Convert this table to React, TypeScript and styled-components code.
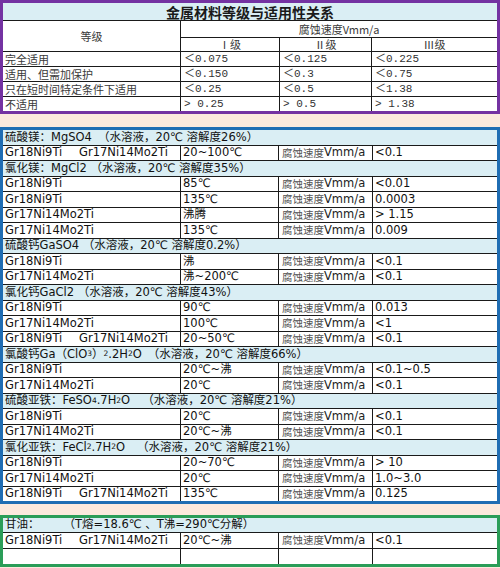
import React from 'react';
import styled, { createGlobalStyle } from 'styled-components';

const GlobalStyle = createGlobalStyle`
    html, body {
        margin: 0;
        padding: 0;
        background: #fce9dd;
    }
    body {
        font-family: "DejaVu Sans", "Noto Sans CJK SC", sans-serif;
        color: #111;
    }
`

const Page = styled.div`
    width: 500px;
    height: 568px;
    background: #fce9dd;
    display: flex;
    flex-direction: column;
    overflow: hidden;
`

const Section = styled.section<{ $color: string; $space?: number }>`
    border: 3px solid ${({ $color }) => $color};
    margin-top: ${({ $space }) => $space ?? 0}px;
    background: #1a1a1a;
`

const Grid = styled.div<{ $cols: string; $rows: string }>`
    display: grid;
    grid-template-columns: ${({ $cols }) => $cols};
    grid-template-rows: ${({ $rows }) => $rows};
    gap: 1px;
`

const Cell = styled.div<{ $tint?: boolean; $center?: boolean; $span?: string; $rowSpan?: number }>`
    background: ${({ $tint }) => ($tint ? '#daeef4' : '#fff')};
    display: flex;
    align-items: center;
    justify-content: ${({ $center }) => ($center ? 'center' : 'flex-start')};
    padding-left: ${({ $center }) => ($center ? 0 : 2)}px;
    grid-column: ${({ $span }) => $span ?? 'auto'};
    grid-row: ${({ $rowSpan }) => ($rowSpan ? `span ${$rowSpan}` : 'auto')};
    white-space: nowrap;
    min-width: 0;
    font-size: 11.5px;
    line-height: 1;
`

const Title = styled(Cell)`
    font-family: "Noto Sans CJK SC", sans-serif;
    font-weight: 700;
    font-size: 14px;
    color: #1a1a1a;
`

const Label = styled(Cell)`
    font-family: "Noto Sans CJK SC", sans-serif;
    font-size: 11px;
    color: #3a3a3a;
`

const Figure = styled(Cell)`
    font-family: "Liberation Mono", "Noto Sans CJK SC", monospace;
    font-size: 11px;
    color: #333;
    padding-left: 3px;
`

const Rate = styled(Cell)`
    padding-left: 3px;
    color: #222;
`

const RateZh = styled.span`
    font-family: "Noto Sans CJK SC", sans-serif;
    color: #555;
    font-size: 10.5px;
`

const Names = styled.div`
    display: grid;
    grid-template-columns: 74px auto;
`

const Sub = styled.sub`
    font-size: 7.5px;
    line-height: 0;
    vertical-align: -3px;
`

const Wide = styled.span`
    display: inline-block;
    width: 6px;
`

type Row = [string[], string, string]

type Group = { title: React.ReactNode; rows: Row[] }

const A = 'Gr18Ni9Ti'
const B = 'Gr17Ni14Mo2Ti'

const groups: Group[] = [
    {
        title: <>硫酸镁：MgSO4<Wide />（水溶液，20℃ 溶解度26%）</>,
        rows: [[[A, B], '20~100℃', '<0.1']],
    },
    {
        title: <>氯化镁：MgCl2 （水溶液，20℃ 溶解度35%）</>,
        rows: [
            [[A], '85℃', '<0.01'],
            [[A], '135℃', '0.0003'],
            [[B], '沸腾', ' > 1.15'],
            [[B], '135℃', '0.009'],
        ],
    },
    {
        title: <>硫酸钙GaSO4 （水溶液，20℃ 溶解度0.2%）</>,
        rows: [
            [[A], '沸', '<0.1'],
            [[B], '沸~200℃', '<0.1'],
        ],
    },
    {
        title: <>氯化钙GaCl2 （水溶液，20℃ 溶解度43%）</>,
        rows: [
            [[A], '90℃', '0.013'],
            [[B], '100℃', '<1'],
            [[A, B], '20~50℃', '<0.1'],
        ],
    },
    {
        title: <>氯酸钙Ga（ClO<Sub>3</Sub>）<Sub>2</Sub>.2H<Sub>2</Sub>O<Wide />（水溶液，20℃ 溶解度66%）</>,
        rows: [
            [[A], '20℃~沸', '<0.1~0.5'],
            [[B], '20℃', '<0.1'],
        ],
    },
    {
        title: <>硫酸亚铁：FeSO<Sub>4</Sub>.7H<Sub>2</Sub>O<Wide /><Wide />（水溶液，20℃ 溶解度21%）</>,
        rows: [
            [[A], '20℃', '<0.1'],
            [[B], '20℃~沸', '<0.1'],
        ],
    },
    {
        title: <>氯化亚铁：FeCl<Sub>2</Sub>.7H<Sub>2</Sub>O<Wide /><Wide />（水溶液，20℃ 溶解度21%）</>,
        rows: [
            [[A], '20~70℃', ' > 10'],
            [[B], '20℃', '1.0~3.0'],
            [[A, B], '135℃', '0.125'],
        ],
    },
]

const grades = [
    ['完全适用', '＜0.075', '＜0.125', '＜0.225'],
    ['适用、但需加保护', '＜0.150', '＜0.3', '＜0.75'],
    ['只在短时间特定条件下适用', '＜0.25', '＜0.5', '＜1.38'],
    ['不适用', '> 0.25', '> 0.5', '> 1.38'],
]

const DataRow = ({ row }: { row: Row }) => {
    const [names, temp, value] = row
    return (
        <>
            <Cell>
                <Names>
                    {names.map(n => <span key={n}>{n}</span>)}
                </Names>
            </Cell>
            <Cell>{temp}</Cell>
            <Rate><RateZh>腐蚀速度</RateZh>Vmm/a</Rate>
            <Cell>{value}</Cell>
        </>
    )
}

const App = () => {
    const rowCount = groups.reduce((n, g) => n + 1 + g.rows.length, 0)

    return (
        <Page>
            <GlobalStyle />
            <Section $color="#7432a2">
                <Grid $cols="177px 98px 91px 1fr" $rows="17px 16px 13px repeat(4, 14px)">
                    <Title $tint $center $span="1 / -1">金属材料等级与适用性关系</Title>
                    <Label $center $rowSpan={2}>等级</Label>
                    <Label $center $span="span 3">腐蚀速度Vmm/a</Label>
                    <Label $center>Ⅰ级</Label>
                    <Label $center>Ⅱ级</Label>
                    <Label $center>Ⅲ级</Label>
                    {grades.map(([name, ...vals]) => (
                        <React.Fragment key={name}>
                            <Label>{name}</Label>
                            {vals.map((v, i) => <Figure key={i}>{v}</Figure>)}
                        </React.Fragment>
                    ))}
                </Grid>
            </Section>

            <Section $color="#1f6db3" $space={13}>
                <Grid $cols="177px 97px 93px 1fr" $rows={`repeat(${rowCount}, 14.5px)`}>
                    {groups.map((g, gi) => (
                        <React.Fragment key={gi}>
                            <Cell $tint $span="1 / -1">{g.title}</Cell>
                            {g.rows.map((r, ri) => <DataRow key={ri} row={r} />)}
                        </React.Fragment>
                    ))}
                </Grid>
            </Section>

            <Section $color="#2a9d58" $space={11}>
                <Grid $cols="177px 97px 93px 1fr" $rows="14px 15px 15px">
                    <Cell $tint $span="1 / -1">甘油：<Wide /><Wide /><Wide /><Wide />（T熔=18.6℃ 、T沸=290℃分解）</Cell>
                    <DataRow row={[[A, B], '20℃~沸', '<0.1']} />
                    <Cell />
                    <Cell />
                    <Cell />
                    <Cell />
                </Grid>
            </Section>
        </Page>
    );
};

export default App;
